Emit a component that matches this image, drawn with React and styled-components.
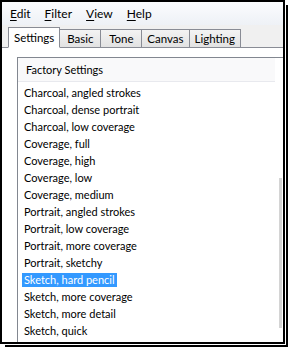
import React from 'react';
import styled, { createGlobalStyle } from 'styled-components';

const GlobalStyle = createGlobalStyle`
  html, body {
    margin: 0;
    padding: 0;
    background: #ffffff;
  }
  body {
    font-family: Lato, "Liberation Sans", sans-serif;
    font-size: 11px;
    color: #000;
  }
`;

const Shot = styled.div`
  width: 289px;
  height: 349px;
  background: #ffffff;
  position: relative;
`;

const Window = styled.div`
  position: relative;
  box-sizing: border-box;
  width: 285px;
  height: 344px;
  border: 2px solid #000;
  background: #f0f0f0;
  display: flex;
  flex-direction: column;

  &::after {
    content: '';
    position: absolute;
    left: 3px;
    top: 3px;
    right: -5px;
    bottom: -5px;
    border-right: 2px solid #000;
    border-bottom: 2px solid #000;
    pointer-events: none;
  }
`;

const MenuBar = styled.div`
  height: 23px;
  display: flex;
  align-items: center;
  padding-left: 1px;
  background: linear-gradient(#fbfcfe, #eef1f6);
  font-size: 12px;
`;

const MenuItem = styled.span`
  padding: 1px 7px 0;
  line-height: 20px;

  u {
    text-decoration: underline;
    text-underline-offset: 2px;
  }
`;

const TabStrip = styled.div`
  display: flex;
  align-items: flex-end;
  height: 22px;
  padding-left: 6px;
  background: #f0f0f0;
  font-size: 11.5px;
`;

const Tab = styled.div`
  box-sizing: border-box;
  min-width: 42px;
  text-align: center;
  height: ${(p) => (p.$active ? '21px' : '18px')};
  padding: 0 5px;
  margin-left: ${(p) => (p.$first ? '0' : '-1px')};
  border: 1px solid #898c95;
  border-bottom: ${(p) => (p.$active ? '1px solid #fff' : '0')};
  background: ${(p) => (p.$active ? '#ffffff' : 'linear-gradient(#f3f3f3, #e2e2e2)')};
  line-height: ${(p) => (p.$active ? '19px' : '17px')};
  position: relative;
  z-index: ${(p) => (p.$active ? 2 : 1)};
  margin-bottom: ${(p) => (p.$active ? '-1px' : '0')};
`;

const Panel = styled.div`
  flex: 1;
  min-height: 0;
  border-top: 1px solid #898c95;
  background: #ffffff;
  padding: 9px 0 0 15px;
  display: flex;
`;

const ListBox = styled.div`
  flex: 1;
  border-left: 1px solid #828790;
  border-top: 1px solid #828790;
  background: #ffffff;
  position: relative;
  overflow: hidden;
`;

const Header = styled.div`
  height: 23px;
  line-height: 23px;
  padding-left: 8px;
  background: #f9f9fa;
  border-bottom: 1px solid #e8e9ee;
  margin-right: 8px;
`;

const Items = styled.div`
  padding: 2px 0 0 4px;
  display: flex;
  flex-direction: column;
`;

const Item = styled.div`
  height: 17px;
  display: flex;
  align-items: center;
`;

const Label = styled.span`
  padding: 0 2px;
  line-height: 14px;
  background: ${(p) => (p.$selected ? '#3399ff' : 'transparent')};
  color: ${(p) => (p.$selected ? '#ffffff' : '#000000')};
`;

const ScrollThumb = styled.div`
  position: absolute;
  right: 1px;
  top: 120px;
  bottom: 14px;
  width: 3px;
  background: #d4d4d4;
`;

const tabs = ['Settings', 'Basic', 'Tone', 'Canvas', 'Lighting'];

const presets = [
  'Charcoal, angled strokes',
  'Charcoal, dense portrait',
  'Charcoal, low coverage',
  'Coverage, full',
  'Coverage, high',
  'Coverage, low',
  'Coverage, medium',
  'Portrait, angled strokes',
  'Portrait, low coverage',
  'Portrait, more coverage',
  'Portrait, sketchy',
  'Sketch, hard pencil',
  'Sketch, more coverage',
  'Sketch, more detail',
  'Sketch, quick',
];

const menus = [
  ['E', 'dit'],
  ['F', 'ilter'],
  ['V', 'iew'],
  ['H', 'elp'],
];

export default function App() {
  return (
    <Shot>
      <GlobalStyle />
      <Window>
        <MenuBar>
          {menus.map(([k, rest]) => (
            <MenuItem key={k}>
              <u>{k}</u>
              {rest}
            </MenuItem>
          ))}
        </MenuBar>
        <TabStrip>
          {tabs.map((t, i) => (
            <Tab key={t} $active={i === 0} $first={i === 0}>
              {t}
            </Tab>
          ))}
        </TabStrip>
        <Panel>
          <ListBox>
            <Header>Factory Settings</Header>
            <Items>
              {presets.map((p) => (
                <Item key={p}>
                  <Label $selected={p === 'Sketch, hard pencil'}>{p}</Label>
                </Item>
              ))}
            </Items>
            <ScrollThumb />
          </ListBox>
        </Panel>
      </Window>
    </Shot>
  );
}
